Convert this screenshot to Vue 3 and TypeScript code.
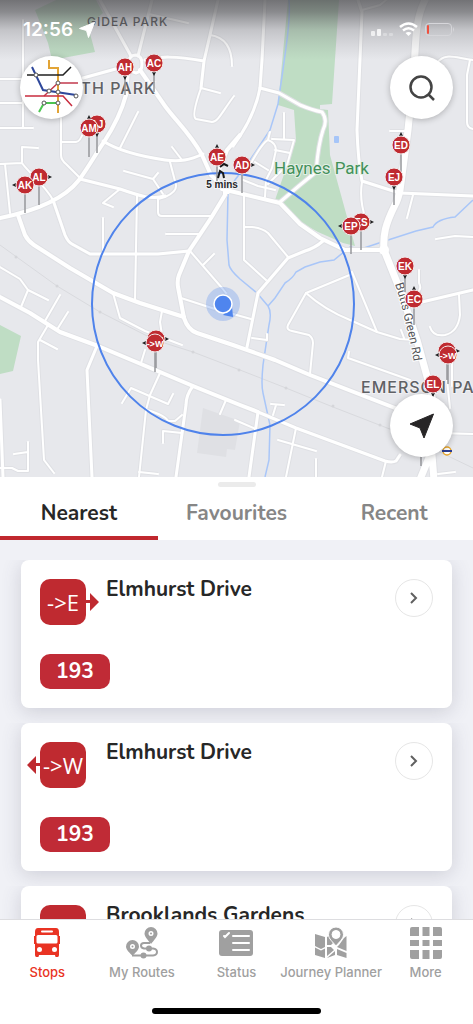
<script setup lang="ts">
import { ref } from 'vue'

type Heading = 'up' | 'down' | 'left' | 'right' | 'none'
interface Road { d: string; w: number }
interface Pin { label: string; x: number; y: number; foot: number; heading: Heading }
interface Stop { id: number; code: string; name: string; heading: Heading; routes: string[] }

const roads: Road[] = [
  { w: 2, d: 'M23 20V127M0 79H24M0 103H22M0 128H33M61 118V155Q61 160 66 164L80 178M61 142H76Q80 142 84 131' },
  { w: 2, d: 'M38 148L22 147V162M0 164L22 163C28 172 45 185 53 200M5 164L10 213M149 14L188 23M201 88L220 93' },
  { w: 2, d: 'M210 35C225 37 232 48 232 66M201 88C195 105 192 117 196 119L212 122C218 122 222 112 234 96' },
  { w: 2, d: 'M138 112L120 148M172 147L182 160M124 171L153 179L158 173M153 179L163 194M120 189L103 203L113 207' },
  { w: 2, d: 'M137 196L135 301M103 218V253M166 234H200M170 162L176 185Q177 192 165 197L158 199V212Q158 216 162 216H211' },
  { w: 2, d: 'M0 267L20 279L28 290L48 300M28 290L21 307M60 295L45 321M68 312L58 328M48 325L38 342V360L44 460L54 473M40 340L57 349' },
  { w: 2, d: 'M113 293L120 318L145 331L182 345M162 311L160 322L162 335M145 350L141 363M160 373L150 395L146 410L139 477' },
  { w: 2, d: 'M122 403L131 388L168 404L173 394M139 472L158 474M226 400L220 414M163 443V431L182 433M147 410Q165 415 168 421L175 421L182 415' },
  { w: 2, d: 'M0 468H12L18 471H28V442M14 454L28 452M181 298L215 309L251 319M190 251L222 288L226 293M203 265L214 254' },
  { w: 2, d: 'M284 113V138M250 165Q262 143 268 140Q276 143 276 150L272 168L266 180L265 197M268 140L270 132M272 139L294 140L287 165L268 184' },
  { w: 2, d: 'M275 150L290 153M255 162L268 170M243 180L258 186L275 190M244 195V260L266 280M244 227H252Q262 228 268 233L288 257' },
  { w: 2, d: 'M362 10L380 5L386 0M362 182Q359 200 366 220M390 131H405M413 195L407 218M437 63C445 52 455 58 473 60M470 60L467 75V122Q467 128 473 129' },
  { w: 2, d: 'M252 338L267 340V334M352 274L306 293L288 325Q286 330 292 331L309 335Q313 338 313 343L310 374M352 272L377 332' },
  { w: 2, d: 'M306 293Q325 310 350 320L377 332L400 339L415 340M349 352L348 358L410 380M419 270V283Q422 288 418 292M401 330L404 338' },
  { w: 2, d: 'M459 295L460 315Q458 332 445 335Q433 337 430 327M436 239L455 236L473 237M447 380L450 408M438 433L473 434M452 360V386' },
  { w: 2, d: 'M278 440L316 451M296 428L286 477M271 404L284 405M276 405L273 415M316 459V477M386 461L382 477M235 420L256 429M438 474L455 472' },
  { w: 3, d: 'M83 78L130 65M218 0L210 35L204 61L201 88M145 60C160 56 175 56 204 61M80 179L120 189C140 196 152 200 165 196M0 400L3 477' },
  { w: 3, d: 'M100 0L131 56M152 0L138 56M260 88L279 93L300 105Q312 110 322 112Q328 120 323 130C318 145 317 160 316 172L300 185L280 202' },
  { w: 3, d: 'M128 62Q130 55 136 55Q142 56 142 64Q142 72 136 73Q129 72 128 62' },
  { w: 4, d: 'M0 218C40 210 65 198 79 180C90 165 98 150 104 142C115 125 122 110 126 95L128 70' },
  { w: 4, d: 'M140 70L165 106C175 120 190 133 202 155L211 175L228 192M240 135L227 150L220 168' },
  { w: 3, d: 'M203 154C190 160 180 162 165 160C145 157 120 152 103 141M53 200L65 235Q68 242 72 244L90 254H158L189 251' },
  { w: 4, d: 'M225 188L225 195L211 218L203 230L189 251L179 275Q177 280 178 287L184 318Q188 330 197 333L233 345L275 360L310 375L395 408' },
  { w: 4, d: 'M18 215L25 235Q28 241 34 245L70 268L113 293L140 303L184 317' },
  { w: 4, d: 'M0 297L30 313L60 332L98 346L160 372L193 386L240 405L258 412' },
  { w: 3, d: 'M258 412L296 428L350 448L385 461Q392 463 396 461L400 455' },
  { w: 3, d: 'M97 346L87 370L92 477M193 386Q186 395 186 405L176 477M258 412L249 477M265 0L262 60L260 88C256 110 245 130 233 146' },
  { w: 4, d: 'M222 189L280 203L300 224L320 238L345 250H384' },
  { w: 3, d: 'M358 0L362 12L357 130Q358 160 362 181L390 190L400 193L473 196' },
  { w: 3, d: 'M323 241Q315 248 305 251L288 258L258 293L247 347M422 302L473 290' },
  { w: 7, d: 'M425 0C415 20 416 40 414 70L408 130L400 190Q398 200 395 205C385 225 383 235 384 250L402 295L417 340L428 380L434 405L430 455L419 482M432 455L434 480' },
]

const pins: Pin[] = [
  { label: 'AH', x: 125, y: 67, foot: 95, heading: 'down' },
  { label: 'AC', x: 154, y: 63, foot: 92, heading: 'down' },
  { label: 'AJ', x: 97, y: 124, foot: 153, heading: 'down' },
  { label: 'AM', x: 89, y: 128, foot: 157, heading: 'up' },
  { label: 'AL', x: 39, y: 177, foot: 205, heading: 'right' },
  { label: 'AK', x: 25, y: 185, foot: 213, heading: 'left' },
  { label: 'AE', x: 217, y: 157, foot: 182, heading: 'up' },
  { label: 'AD', x: 242, y: 165, foot: 193, heading: 'right' },
  { label: 'ED', x: 401, y: 145, foot: 172, heading: 'up' },
  { label: 'EJ', x: 394, y: 177, foot: 205, heading: 'down' },
  { label: 'ES', x: 361, y: 222, foot: 250, heading: 'right' },
  { label: 'EP', x: 351, y: 226, foot: 254, heading: 'left' },
  { label: 'EK', x: 405, y: 266, foot: 292, heading: 'down' },
  { label: 'EC', x: 414, y: 299, foot: 325, heading: 'up' },
  { label: '->E', x: 156, y: 339, foot: 368, heading: 'right' },
  { label: '->W', x: 155, y: 343, foot: 372, heading: 'left' },
  { label: '->E', x: 447, y: 351, foot: 380, heading: 'right' },
  { label: '->W', x: 448, y: 355, foot: 384, heading: 'left' },
  { label: 'EL', x: 433, y: 384, foot: 410, heading: 'down' },
]

const arrows: Record<Heading, string> = {
  up: 'M-2 -9L0 -13L2 -9Z',
  down: 'M-2 9L0 13L2 9Z',
  left: 'M-9 -2L-13 0L-9 2Z',
  right: 'M9 -2L13 0L9 2Z',
  none: '',
}

const tabs = ['Nearest', 'Favourites', 'Recent']
const activeTab = ref('Nearest')

const stops: Stop[] = [
  { id: 1, code: '->E', name: 'Elmhurst Drive', heading: 'right', routes: ['193'] },
  { id: 2, code: '->W', name: 'Elmhurst Drive', heading: 'left', routes: ['193'] },
  { id: 3, code: '', name: 'Brooklands Gardens', heading: 'none', routes: ['193'] },
]
</script>

<template>
  <div class="app">
    <section class="map" aria-label="Map">
      <svg class="map-art" viewBox="0 0 473 477" preserveAspectRatio="xMidYMid slice">
        <defs>
          <linearGradient id="shade" x1="0" y1="0" x2="0" y2="1">
            <stop offset="0" stop-color="#555558" stop-opacity="0.800" />
            <stop offset="0.200" stop-color="#58585b" stop-opacity="0.650" />
            <stop offset="0.500" stop-color="#68686c" stop-opacity="0.280" />
            <stop offset="1" stop-color="#808085" stop-opacity="0" />
          </linearGradient>
          <path id="butts" d="M395 284Q402 305 406 326Q411 343 415 370" />
        </defs>
        <rect width="473" height="477" fill="#e7e8ec" />
        <path fill="#bfddc4" d="M35 10L56 0H96L103 13L88 26L95 52L52 60L48 43ZM288 0H339L332 104L320 105V109L328 110L330 155L355 246L343 243L318 232L296 220L275 200L296 140L294 110L278 105ZM0 325L21 336L13 371L0 374Z" />
        <path fill="#dfe0e4" d="M203 408L240 421L235 450L227 449L226 457L197 453Z" />
        <rect x="334" y="136" width="5" height="7" rx="1" fill="#a6c5f8" />
        <path class="rail" d="M0 245L57 286L100 312L155 340L193 352L240 370L286 388L333 407L400 433L473 468" />
        <g fill="#d5d6da">
          <circle cx="16" cy="257" r="1.500" /><circle cx="57" cy="286" r="1.500" /><circle cx="100" cy="312" r="1.500" />
          <circle cx="193" cy="352" r="1.500" /><circle cx="239" cy="370" r="1.500" /><circle cx="286" cy="388" r="1.500" />
          <circle cx="333" cy="406" r="1.500" /><circle cx="380" cy="425" r="1.500" />
        </g>
        <path class="river" d="M289 0C291 20 285 55 278 104L270 130L250 160L235 180L228 193L227 240L229 265Q230 270 240 279L257 293L268 306Q272 312 269 325L263 365Q261 385 263 393L270 425L269 460L265 477M268 306L275 298L285 283Q293 278 296 272L305 267L320 262L334 260L350 247L361 249L385 241L416 231L433 227Q437 219 455 217L473 200" />
        <path v-for="(r, i) in roads" :key="'c' + i" class="casing" :d="r.d" :stroke-width="r.w + 2" />
        <path v-for="(r, i) in roads" :key="'r' + i" class="road" :d="r.d" :stroke-width="r.w" />
        <circle cx="384" cy="250" r="5" fill="#fff" />

        <text class="area small" x="87" y="26">GIDEA PARK</text>
        <text class="area" x="156" y="94" text-anchor="end">HEATH PARK</text>
        <text class="area" x="361" y="393">EMERSON PARK</text>
        <text class="park" x="274" y="174">Haynes Park</text>
        <text class="street"><textPath href="#butts">Butts Green Rd</textPath></text>

        <circle class="radius" cx="223" cy="304" r="131" />
        <circle cx="223" cy="304" r="17" fill="#5b8def" fill-opacity="0.300" />
        <path d="M233 317L232 306L223 315Z" fill="#4f85ee" />
        <circle cx="223" cy="304" r="9" fill="#4f85ee" stroke="#fff" stroke-width="1.500" />

        <path d="M421 455V466" stroke="#96979b" stroke-width="1.500" />
        <g v-for="(p, i) in pins" :key="i">
          <path :d="`M${p.x} ${p.y + 9}V${p.foot}`" stroke="#96979b" stroke-width="1.500" />
          <g :transform="`translate(${p.x} ${p.y})`">
            <path :d="arrows[p.heading]" fill="#1c1c1e" />
            <circle r="9" fill="#bf2a30" stroke="#f3e9ea" stroke-width="1" />
            <text class="pin-text" :class="{ long: p.label.length > 2 }" y="4" text-anchor="middle">{{ p.label }}</text>
          </g>
        </g>
        <path d="M218 178L220 171L223 173L224 178M220 167L224 164L228 166" fill="none" stroke="#17181a" stroke-width="2" />
        <text class="walk" x="222" y="188" text-anchor="middle">5 mins</text>
        <circle cx="447" cy="451" r="4" fill="#fff" stroke="#e6a52c" stroke-width="1.500" />
        <path d="M442 451H452" stroke="#2b3c91" stroke-width="2" />
        <rect width="473" height="60" fill="url(#shade)" />
      </svg>

      <div class="status">
        <span class="time">12:56
          <svg width="16" height="16" viewBox="0 0 16 16"><path d="M15.500 .5L9.500 15.500L7.500 8.500L.5 6.500Z" fill="#fff" stroke="#fff" stroke-linejoin="round" /></svg>
        </span>
        <svg width="88" height="18" viewBox="0 0 88 18">
          <g fill="#fff"><rect x="4" y="10" width="4" height="5" rx="1" opacity=".7" /><rect x="10" y="8" width="4" height="7" rx="1" opacity=".8" /><rect x="16" y="12" width="4" height="3" rx="1" opacity=".3" /><rect x="22" y="12" width="4" height="3" rx="1" opacity=".3" /></g>
          <g fill="none" stroke="#fff" stroke-width="2.500"><path d="M33 6Q41.500 -1 50 6" /><path d="M36 9.500Q41.500 5 47 9.500" /></g>
          <path d="M38.500 12Q41.500 10 44.500 12L41.500 15Z" fill="#fff" />
          <rect x="58.500" y="2.500" width="26" height="12" rx="3.500" fill="none" stroke="#d6d6da" />
          <rect x="60" y="4" width="2" height="9" rx="1" fill="#f0503f" />
          <path d="M86 6Q88 8.500 86 11Z" fill="#d6d6da" />
        </svg>
      </div>

      <div class="controls">
        <button class="round" type="button" aria-label="Tube map">
          <svg width="63" height="63" viewBox="0 0 63 63" fill="none" stroke-width="1.500">
            <path d="M29 4V12H38V57" stroke="#e2a436" stroke-width="2" />
            <path d="M7 19H43L51 11" stroke="#222" />
            <path d="M12 11L23 34L56 39" stroke="#2f489b" stroke-width="2" />
            <path d="M58 27H38L24 40" stroke="#c23a4d" />
            <path d="M5 40H43L52 50" stroke="#c92c3f" />
            <path d="M38 47H24L19 56" stroke="#4cc552" stroke-width="2" />
            <g fill="#fff" stroke="#555" stroke-width="1"><circle cx="16" cy="19" r="2" /><circle cx="38" cy="27" r="2" /><circle cx="29" cy="35" r="2" /><circle cx="38" cy="36" r="2" /><circle cx="24" cy="47" r="2" /><circle cx="38" cy="47" r="2" /><circle cx="56" cy="40" r="2" /></g>
          </svg>
        </button>
        <button class="round" type="button" aria-label="Search">
          <svg width="28" height="28" viewBox="0 0 28 28" fill="none" stroke="#444" stroke-width="2.500"><circle cx="13" cy="13" r="10.500" /><path d="M20 20L26 26" /></svg>
        </button>
      </div>
      <button class="round locate" type="button" aria-label="My location">
        <svg width="26" height="26" viewBox="0 0 26 26"><path d="M24.500 1L15 25L11 15L1 11Z" fill="#272526" stroke="#272526" stroke-linejoin="round" /></svg>
      </button>
    </section>

    <main class="sheet">
      <span class="grabber" />
      <div class="tabs" role="tablist">
        <button v-for="t in tabs" :key="t" type="button" role="tab" class="tab" :class="{ active: t === activeTab }" :aria-selected="t === activeTab" @click="activeTab = t">{{ t }}</button>
      </div>
      <ul class="list">
        <li v-for="s in stops" :key="s.id" class="item">
          <article class="card">
            <div class="top">
              <div class="badge">
                <svg v-if="s.heading !== 'none'" class="pointer" :class="s.heading" width="14" height="18" viewBox="0 0 14 18">
                  <path :d="s.heading === 'right' ? 'M0 7H5V0L14 9L5 18V10H0Z' : 'M14 7H9V0L0 9L9 18V10H14Z'" fill="#bf2a30" />
                </svg>
                {{ s.code }}
              </div>
              <h2 class="name">{{ s.name }}</h2>
              <button class="open" type="button" :aria-label="'Open ' + s.name">
                <svg width="8" height="12" viewBox="0 0 8 12"><path d="M1 1L6 6L1 11" fill="none" stroke="#606060" stroke-width="2" /></svg>
              </button>
            </div>
            <div class="routes"><span v-for="r in s.routes" :key="r" class="route">{{ r }}</span></div>
          </article>
        </li>
      </ul>
    </main>

    <nav class="nav">
      <div class="links">
        <a href="#stops" class="link current">
          <svg width="32" height="32" viewBox="0 0 32 32">
            <path fill="#e93323" fill-rule="evenodd" d="M7 1H25Q28 1 28 5V9H29V17H28V28Q28 30 26.500 30H25Q24 30 24 28H8Q8 30 7 30H5.500Q4 30 4 28V17H3V9H4V5Q4 1 7 1ZM11 3.500Q10 3.500 10 4.500T11 5.500H21Q22 5.500 22 4.500T21 3.500ZM7 8Q5.500 8 5.500 9.500V15Q5.500 16.500 7 16.500H25Q26.500 16.500 26.500 15V9.500Q26.500 8 25 8ZM8.500 20A2.500 2.500 0 1 0 8.500 25A2.500 2.500 0 1 0 8.500 20ZM23.500 20A2.500 2.500 0 1 0 23.500 25A2.500 2.500 0 1 0 23.500 20Z" />
          </svg>
          <span>Stops</span>
        </a>
        <a href="#routes" class="link">
          <svg width="32" height="32" viewBox="0 0 32 32">
            <path fill="#a0a0a0" fill-rule="evenodd" d="M6.500 13A6.500 6.500 0 0 1 13 19.500C13 23 9 26 6.500 29C4 26 0 23 0 19.500A6.500 6.500 0 0 1 6.500 13ZM6.500 17A2.500 2.500 0 1 0 6.500 22A2.500 2.500 0 1 0 6.500 17ZM25 0A6.500 6.500 0 0 1 31.500 6.500C31.500 10 28 13 25 17C22 13 18.500 10 18.500 6.500A6.500 6.500 0 0 1 25 0ZM25 4A2.500 2.500 0 1 0 25 9A2.500 2.500 0 1 0 25 4Z" />
            <path fill="none" stroke="#a0a0a0" stroke-width="2" d="M6 28.500H27Q31 28 31 25T27 21.500H18Q15 21 15 18.500T18 16H24" />
            <circle cx="17.500" cy="28.500" r="3" fill="#a0a0a0" /><circle cx="23" cy="21.500" r="3" fill="#a0a0a0" />
            <circle cx="6.500" cy="19.500" r="1" fill="#a0a0a0" /><circle cx="25" cy="6.500" r="1" fill="#a0a0a0" />
          </svg>
          <span>My Routes</span>
        </a>
        <a href="#status" class="link">
          <svg width="34" height="32" viewBox="0 0 34 32">
            <rect y="3" width="34" height="26" rx="3" fill="#a0a0a0" />
            <path fill="none" stroke="#fff" stroke-width="2" stroke-linecap="round" d="M5 9L6 10L10 6M14 9H30M14 16H30M14 23H30" />
          </svg>
          <span>Status</span>
        </a>
        <a href="#planner" class="link">
          <svg width="32" height="32" viewBox="0 0 32 32">
            <path fill="#a0a0a0" d="M0 7L10 10V20L6 22L0 19ZM0 20.500L6 23.500L10 21.500V31L0 28ZM12 10L14 9L18 16L16 18L12 18ZM12 20L16 20L19 23L12 29ZM12 31L20 24V28ZM22 22L31.500 26V31L22 28ZM24 18L29 11L31.500 9V24L22 20Z" />
            <path fill="#a0a0a0" stroke="#fff" stroke-width="1" fill-rule="evenodd" d="M21 0A7.500 7.500 0 0 1 28.500 7.500C28.500 12 24 15 21 19C18 15 13.500 12 13.500 7.500A7.500 7.500 0 0 1 21 0ZM21 3.500A4 4 0 1 0 21 11.500A4 4 0 1 0 21 3.500Z" />
          </svg>
          <span>Journey Planner</span>
        </a>
        <a href="#more" class="link">
          <svg width="32" height="32" viewBox="0 0 32 32" fill="#a0a0a0">
            <path d="M2 0H9V9H0V2Q0 0 2 0ZM12.500 0H19.500V9H12.500ZM23 0H30Q32 0 32 2V9H23ZM0 13H9V19H0ZM12.500 13H19.500V19H12.500ZM23 13H32V19H23ZM0 23H9V32H2Q0 32 0 30ZM12.500 23H19.500V32H12.500ZM23 23H32V30Q32 32 30 32H23Z" />
          </svg>
          <span>More</span>
        </a>
      </div>
      <span class="home" />
    </nav>
  </div>
</template>

<style>
body { margin: 0; background: #f0f1f6; }
</style>

<style scoped>
.app { display: flex; flex-direction: column; height: 100vh; font-family: "Inter", "Liberation Sans", sans-serif; background: #f0f1f6; }
button { font: inherit; border: 0; padding: 0; background: none; cursor: pointer; }
.map { position: relative; flex: none; overflow: hidden; }
.map-art { display: block; width: 100%; max-height: 60vh; }
.casing { fill: none; stroke: #dfe0e4; stroke-linejoin: round; }
.road { fill: none; stroke: #fff; stroke-linejoin: round; stroke-linecap: round; }
.rail { fill: none; stroke: #d9dade; stroke-width: 1; }
.river { fill: none; stroke: #a9c6f8; stroke-width: 1.500; }
.radius { fill: none; stroke: #4f83eb; stroke-width: 2; }
.area { font: 500 16px "Inter", sans-serif; letter-spacing: 1px; fill: #606165; stroke: #f1f1f4; stroke-width: 2; paint-order: stroke; }
.area.small { font-size: 12px; fill: #4c4d50; stroke: none; }
.park { font: 400 17px "Roboto", sans-serif; fill: #43905a; stroke: #e4efe6; stroke-width: 2; paint-order: stroke; }
.street { font: 12px "Roboto", sans-serif; fill: #55565a; stroke: #fff; stroke-width: 2; paint-order: stroke; }
.pin-text { font: bold 10px "Liberation Sans", sans-serif; fill: #fff; }
.pin-text.long { font-size: 9px; }
.walk { font: bold 10px "Liberation Sans", sans-serif; fill: #26272a; stroke: #f3f3f5; stroke-width: 2; paint-order: stroke; }
.status { position: absolute; top: 20px; left: 23px; right: 18px; display: flex; justify-content: space-between; align-items: center; }
.time { display: flex; align-items: center; gap: 6px; color: #fff; font-size: 19px; font-weight: 600; line-height: 20px; }
.controls { position: absolute; top: 56px; left: 20px; right: 20px; display: flex; justify-content: space-between; }
.round { display: flex; align-items: center; justify-content: center; width: 63px; height: 63px; border-radius: 50%; background: #fff; box-shadow: 0 1px 6px rgba(0, 0, 0, 0.25); }
.locate { position: absolute; right: 20px; bottom: 20px; }
.sheet { flex: 1; min-height: 0; display: flex; flex-direction: column; position: relative; }
.grabber { position: absolute; top: 5px; left: 0; right: 0; margin: auto; width: 38px; height: 5px; border-radius: 3px; background: #ebebeb; }
.tabs { flex: none; display: flex; background: #fff; }
.tab { flex: 1; height: 63px; padding-top: 12px; border-bottom: 4px solid transparent; font: 700 21px "Nunito", "Noto Sans", sans-serif; line-height: 28px; color: #868686; }
.tab.active { color: #272727; border-color: #c0282e; }
.list { flex: 1; min-height: 0; overflow: hidden; list-style: none; margin: 0; padding: 20px 0 0; }
.item { padding: 0 21px 15px; overflow: hidden; }
.card { padding: 19px; border-radius: 8px; background: #fff; box-shadow: 0 4px 20px rgba(70, 70, 95, 0.200); display: flex; flex-direction: column; gap: 29px; }
.top { display: flex; align-items: flex-start; gap: 20px; }
.badge { position: relative; flex: none; display: flex; align-items: center; justify-content: center; width: 46px; height: 46px; border-radius: 10px; background: #bf2a30; color: #fff; font: 500 22px "Open Sans", sans-serif; white-space: nowrap; }
.pointer { position: absolute; top: 14px; }
.pointer.right { left: 45px; }
.pointer.left { right: 45px; }
.name { flex: 1; min-width: 0; margin: 0; font: 700 21px "Nunito", "Noto Sans", sans-serif; line-height: 20px; color: #272727; white-space: nowrap; }
.open { flex: none; display: flex; align-items: center; justify-content: center; width: 38px; height: 38px; border: 1px solid #e6e6e6; border-radius: 50%; }
.routes { display: flex; gap: 8px; }
.route { width: 70px; height: 35px; border-radius: 10px; background: #c02b36; color: #fff; text-align: center; font: 700 21px "Nunito", "Noto Sans", sans-serif; line-height: 35px; }
.nav { flex: none; display: flex; flex-direction: column; align-items: center; justify-content: space-between; height: 87px; padding: 7px 0 10px; border-top: 1px solid #dddde0; background: #fff; position: relative; }
.links { display: flex; width: 100%; }
.link { flex: 1 1 0; min-width: 0; display: flex; flex-direction: column; align-items: center; gap: 5px; color: #a0a0a0; font-size: 13px; font-weight: 500; line-height: 16px; text-decoration: none; white-space: nowrap; }
.current { color: #e93323; }
.home { width: 169px; height: 6px; border-radius: 3px; background: #000; }
</style>
